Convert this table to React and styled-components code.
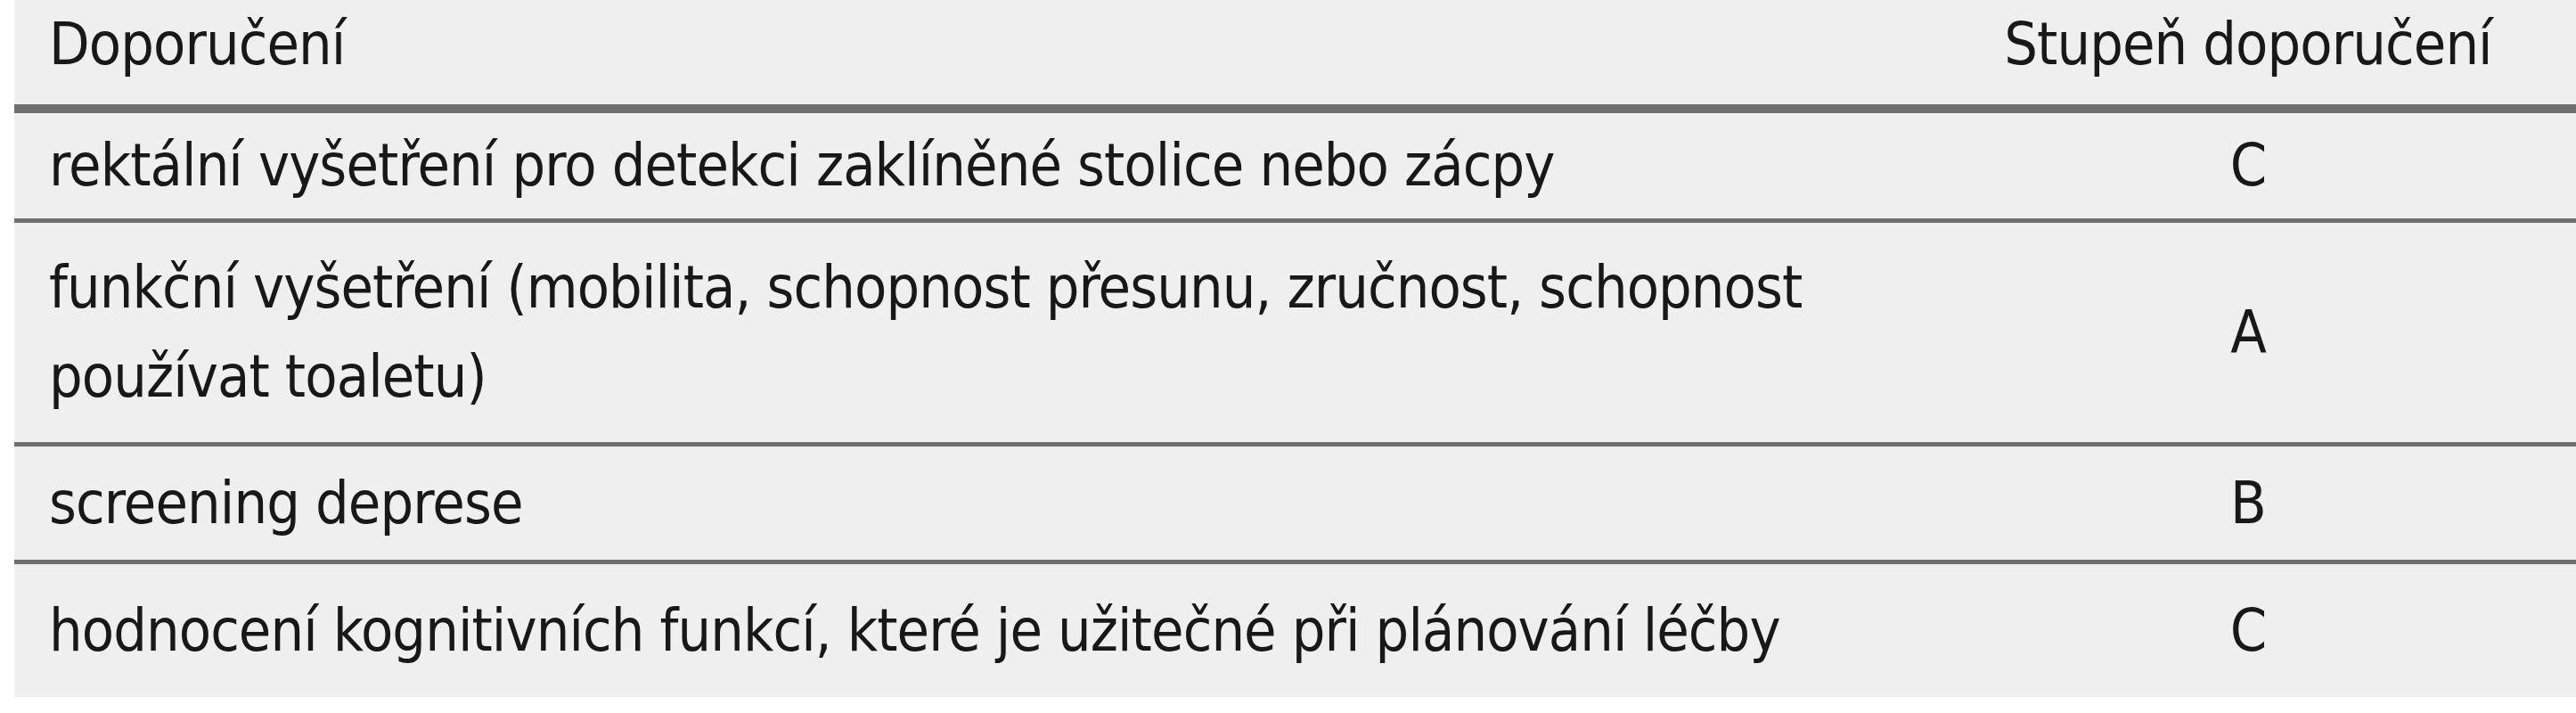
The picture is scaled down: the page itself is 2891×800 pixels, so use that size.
import React from "react";
import styled, { createGlobalStyle } from "styled-components";

const Global = createGlobalStyle`
  html, body { margin: 0; padding: 0; background: #ffffff; }
  body { font-family: "DejaVu Sans Condensed", "DejaVu Sans", sans-serif; }
`;

const Page = styled.div`
  padding-left: 16px;
  overflow: hidden;
  width: 2875px;
`;

const Table = styled.table`
  width: 2875px;
  border-collapse: separate;
  border-spacing: 0;
  background: #efefef;
  color: #181818;
  font-family: "DejaVu Sans Condensed", "DejaVu Sans", sans-serif;
  font-stretch: condensed;
  font-size: 66px;
  letter-spacing: -0.9px;
  line-height: 100px;
  table-layout: fixed;
`;

const HeadCell = styled.th`
  font-weight: normal;
  text-align: ${(p) => (p.$center ? "center" : "left")};
  padding: 0 0 17px ${(p) => (p.$center ? "0" : "39px")};
  height: 100px;
  vertical-align: top;
  border-bottom: 10px solid #6f6f6f;
  width: ${(p) => p.$w || "auto"};
`;

const Cell = styled.td`
  text-align: ${(p) => (p.$center ? "center" : "left")};
  padding: 0 0 0 ${(p) => (p.$center ? "0" : "39px")};
  height: ${(p) => p.$h}px;
  vertical-align: middle;
  border-bottom: ${(p) => (p.$last ? "none" : "5px solid #6f6f6f")};
`;

const TextWrap = styled.div`
  max-width: 2040px;
`;

const rows = [
  { text: "rektální vyšetření pro detekci zaklíněné stolice nebo zácpy", grade: "C", h: 118 },
  { text: "funkční vyšetření (mobilita, schopnost přesunu, zručnost, schopnost používat toaletu)", grade: "A", h: 246 },
  { text: "screening deprese", grade: "B", h: 127 },
  { text: "hodnocení kognitivních funkcí, které je užitečné při plánování léčby", grade: "C", h: 149 },
];

export default function App() {
  return (
    <>
      <Global />
      <Page>
        <Table>
          <thead>
            <tr>
              <HeadCell>Doporučení</HeadCell>
              <HeadCell $center $w="736px">Stupeň doporučení</HeadCell>
            </tr>
          </thead>
          <tbody>
            {rows.map((r, i) => (
              <tr key={i}>
                <Cell $h={r.h} $last={i === rows.length - 1}>
                  <TextWrap>{r.text}</TextWrap>
                </Cell>
                <Cell $h={r.h} $center $last={i === rows.length - 1}>
                  {r.grade}
                </Cell>
              </tr>
            ))}
          </tbody>
        </Table>
      </Page>
    </>
  );
}
